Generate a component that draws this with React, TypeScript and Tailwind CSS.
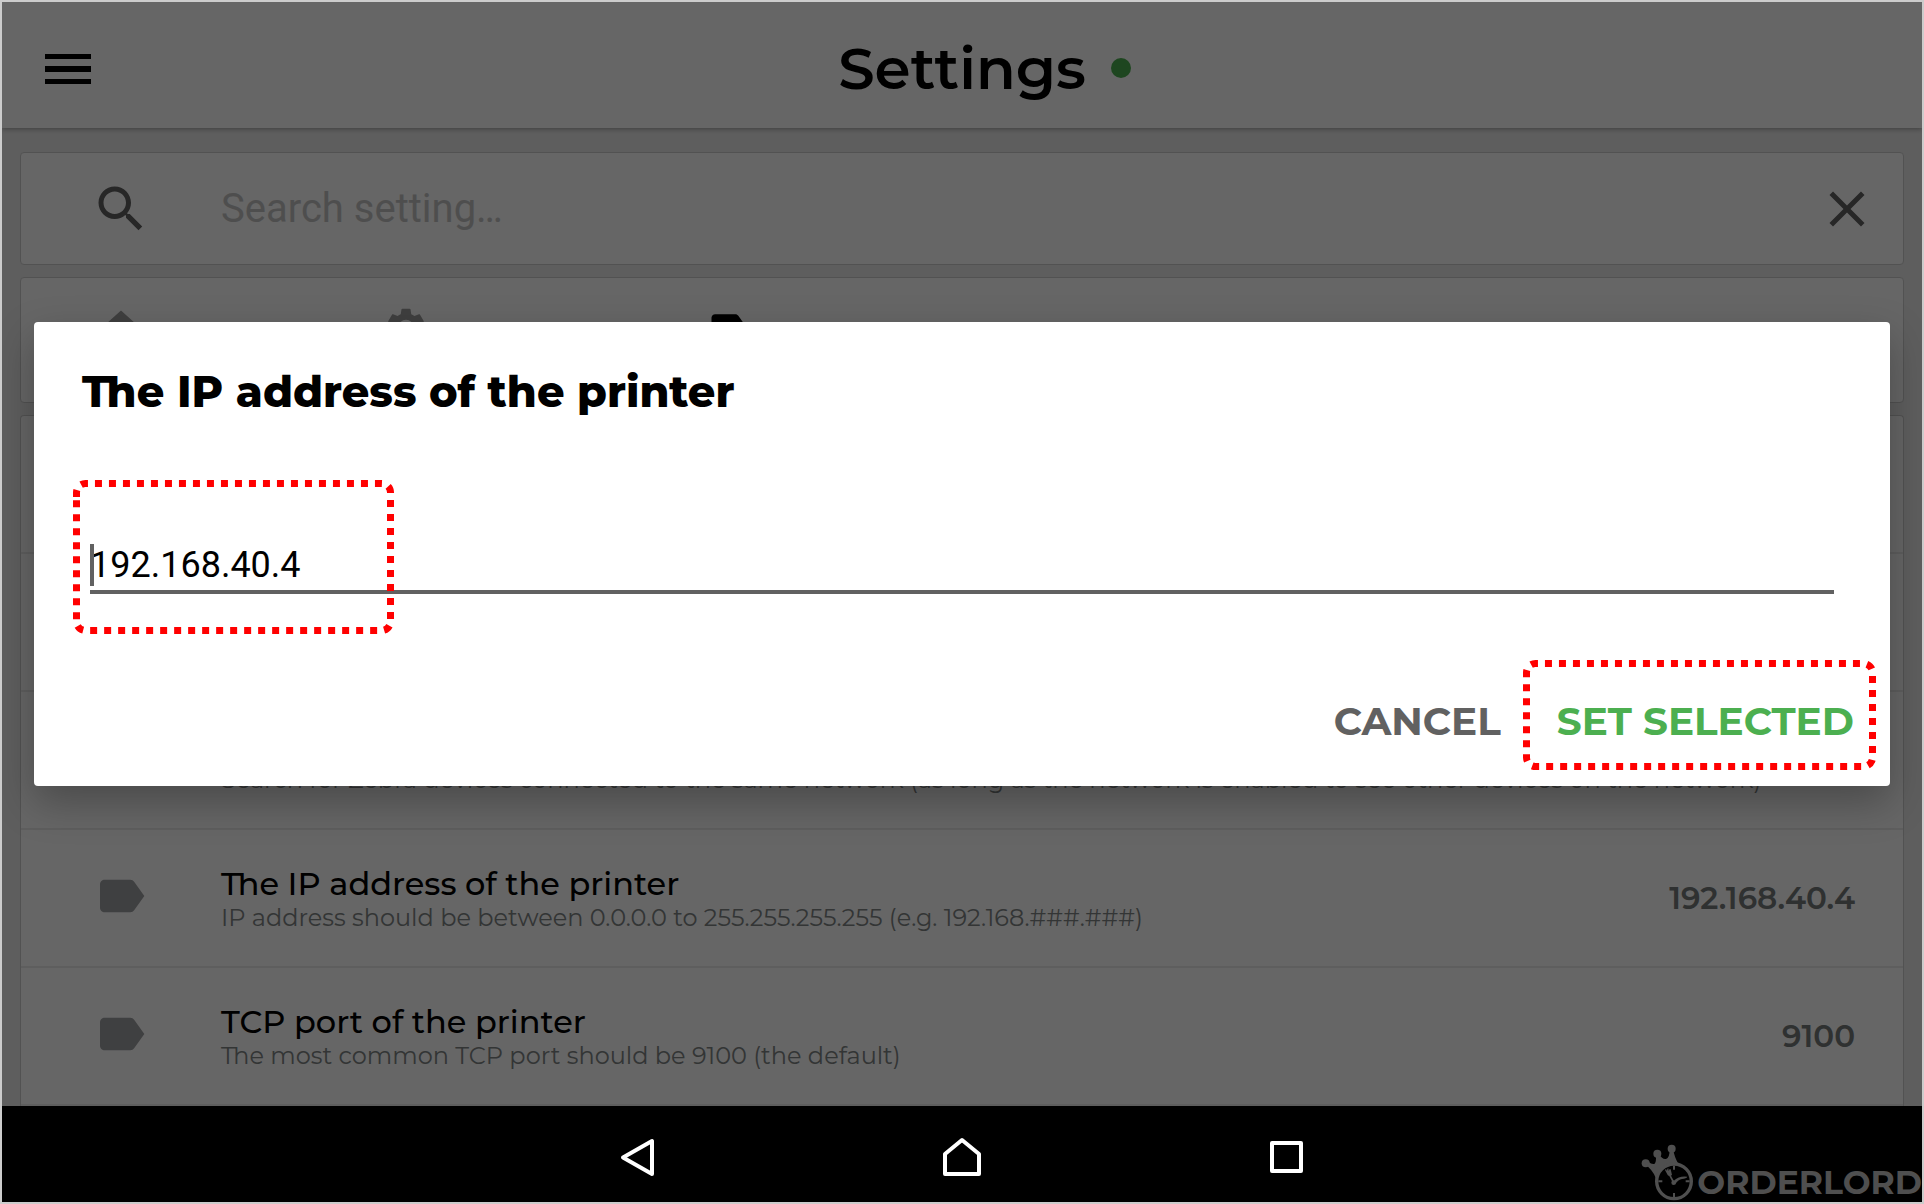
import React, { useState } from "react";

const GEAR =
  "M19.43 12.98c.04-.32.07-.64.07-.98s-.03-.66-.07-.98l2.11-1.65c.19-.15.24-.42.12-.64l-2-3.46c-.12-.22-.39-.3-.61-.22l-2.49 1c-.52-.4-1.08-.73-1.69-.98l-.38-2.65C14.46 2.18 14.25 2 14 2h-4c-.25 0-.46.18-.49.42l-.38 2.65c-.61.25-1.17.59-1.69.98l-2.49-1c-.23-.09-.49 0-.61.22l-2 3.46c-.13.22-.07.49.12.64l2.11 1.65c-.04.32-.07.65-.07.98s.03.66.07.98l-2.11 1.65c-.19.15-.24.42-.12.64l2 3.46c.12.22.39.3.61.22l2.49-1c.52.4 1.08.73 1.69.98l.38 2.65c.03.24.24.42.49.42h4c.25 0 .46-.18.49-.42l.38-2.65c.61-.25 1.17-.59 1.69-.98l2.49 1c.23.09.49 0 .61-.22l2-3.46c.12-.22.07-.49-.12-.64l-2.11-1.65zM12 16a4 4 0 1 1 0-8 4 4 0 0 1 0 8z";
const HOME = "M10 20v-6h4v6h5v-8h3L12 3 2 12h3v8z";
const LABEL =
  "M17.63 5.84C17.27 5.33 16.67 5 16 5L5 5.01C3.9 5.01 3 5.9 3 7v10c0 1.1.9 1.99 2 1.99L16 19c.67 0 1.27-.33 1.63-.84L22 12l-4.37-6.16z";
const SEARCH =
  "M15.5 14h-.79l-.28-.27C15.41 12.59 16 11.11 16 9.5 16 5.91 13.09 3 9.5 3S3 5.91 3 9.5 5.91 16 9.5 16c1.61 0 3.09-.59 4.23-1.57l.27.28v.79l5 4.99L20.49 19l-4.99-5zm-6 0C7.01 14 5 11.99 5 9.5S7.01 5 9.5 5 14 7.01 14 9.5 11.99 14 9.5 14z";
const CLOSE =
  "M19 6.41 17.59 5 12 10.59 6.41 5 5 6.41 10.59 12 5 17.59 6.41 19 12 13.41 17.59 19 19 17.59 13.41 12z";

function Icon({ d, className }: { d: string; className: string }) {
  return (
    <svg viewBox="0 0 24 24" fill="currentColor" fillRule="evenodd" aria-hidden="true" className={className}>
      <path d={d} />
    </svg>
  );
}

function Highlight({ w, h, className }: { w: number; h: number; className: string }) {
  const r = 9;
  const d = `M3.5 17V${3.5 + r}a${r} ${r} 0 0 1 ${r} -${r}H${w - 3.5 - r}a${r} ${r} 0 0 1 ${r} ${r}V${h - 3.5 - r}a${r} ${r} 0 0 1 -${r} ${r}H${3.5 + r}a${r} ${r} 0 0 1 -${r} -${r}V17`;
  return (
    <svg
      width={w}
      height={h}
      viewBox={`0 0 ${w} ${h}`}
      aria-hidden="true"
      className={`pointer-events-none absolute max-w-none ${className}`}
    >
      <path d={d} fill="none" stroke="#ff0000" strokeWidth="7" strokeDasharray="7 7" />
    </svg>
  );
}

type Setting = { title?: string; hint?: string; value?: string };

const settings: Setting[] = [
  {},
  {},
  {
    hint: "Search for Zebra devices connected to the same network (as long as the network is enabled to see other devices on the network)",
  },
  {
    title: "The IP address of the printer",
    hint: "IP address should be between 0.0.0.0 to 255.255.255.255 (e.g. 192.168.###.###)",
    value: "192.168.40.4",
  },
  {
    title: "TCP port of the printer",
    hint: "The most common TCP port should be 9100 (the default)",
    value: "9100",
  },
];

function SettingRow({ title, hint, value }: Setting) {
  return (
    <li className="flex h-[138px] items-center border-b-2 border-[#ebebeb] pr-12 pl-[72px]">
      <Icon d={LABEL} className="mb-1 size-14 shrink-0 text-[#9fa0a3]" />
      <div className="ml-[72px] min-w-0 flex-1 whitespace-nowrap">
        <div className="h-10 text-[32px] leading-10 font-medium text-black">{title}</div>
        <div className="h-7 text-[24px] leading-7 text-[#808585]">{hint}</div>
      </div>
      <div className="text-[31px] leading-10 font-semibold text-[#757a7a]">{value}</div>
    </li>
  );
}

function Dialog() {
  const [ip, setIp] = useState("192.168.40.4");
  return (
    <div className="absolute inset-0 flex items-center bg-black/60 px-8">
      <form
        role="dialog"
        aria-labelledby="dialog-title"
        onSubmit={(e) => e.preventDefault()}
        className="w-full rounded bg-white pt-11 pb-[41px] shadow-[0_16px_40px_rgba(0,0,0,0.28)]"
      >
        <h2 id="dialog-title" className="px-12 text-[43px] leading-[52px] font-extrabold text-black">
          The IP address of the printer
        </h2>
        <div className="relative mx-14 mt-[126px]">
          <input
            type="text"
            aria-labelledby="dialog-title"
            value={ip}
            onChange={(e) => setIp(e.target.value)}
            className="block h-[50px] w-full border-b-4 border-[#616161] pb-1 font-[Roboto,sans-serif] text-[36px] leading-[42px] text-black outline-none"
          />
          <span className="absolute top-0 left-0 h-[42px] w-1 bg-[#616161]" />
          <Highlight w={321} h={154} className="-top-16 -left-[17px]" />
        </div>
        <div className="mt-[103px] flex justify-end gap-14 pr-9 text-[39px] leading-[48px] font-bold">
          <button type="button" className="text-[#616161]">
            CANCEL
          </button>
          <div className="relative">
            <button type="submit" className="text-[#4caf50]">
              SET SELECTED
            </button>
            <Highlight w={353} h={110} className="-top-[37px] -left-[34px]" />
          </div>
        </div>
      </form>
    </div>
  );
}

function Logo() {
  return (
    <div className="absolute right-0 bottom-0 flex items-end gap-0.5 text-[#4f4f4f]">
      <svg viewBox="12 21 162 174" aria-hidden="true" className="h-[58px] w-[54px]">
        <g fill="currentColor">
          <circle cx="26" cy="79" r="12" />
          <circle cx="61" cy="50" r="12" />
          <circle cx="104" cy="35" r="12" />
          <path d="M24 82L34 74Q46 84 53 80Q58 76 57 54L66 52Q76 68 87 66Q98 62 98 38L109 38Q111 58 126 84L56 122Q46 98 24 82Z" />
        </g>
        <circle cx="111" cy="133" r="52" fill="#000" stroke="currentColor" strokeWidth="10" />
        <g stroke="currentColor" strokeWidth="6" fill="none">
          <path d="M111 86v12M111 168v12M64 133h12M146 133h12" />
          <path d="M111 138L97 112" strokeWidth="5" />
        </g>
        <g fill="currentColor">
          <circle cx="110" cy="137" r="7" />
          <path d="M84 99l3-3 3 6 1-7 3-1 1 8 3-6 3 1 4 17q-8 6-13 0z" />
          <path d="M112 130Q126 116 151 119Q148 125 135 126Q124 128 115 141Z" />
        </g>
      </svg>
      <span className="text-[33px] leading-10 font-bold">ORDERLORD</span>
    </div>
  );
}

export default function App() {
  return (
    <div className="flex min-h-screen flex-col overflow-hidden border-2 border-[#ccc] bg-black font-[Montserrat,Inter,sans-serif] [font-variant-ligatures:discretionary-ligatures]">
      <div className="relative flex flex-1 flex-col overflow-hidden bg-[#ebebeb]">
        <header className="relative flex h-[126px] items-center justify-center bg-white pt-2 shadow-[0_1px_5px_rgba(0,0,0,0.35)]">
          <button type="button" aria-label="Menu" className="absolute left-[43px]">
            <svg viewBox="0 0 46 30" aria-hidden="true" className="h-[30px] w-[46px]">
              <path d="M0 0h46v5H0zM0 12h46v6H0zM0 25h46v5H0z" />
            </svg>
          </button>
          <h1 className="relative text-[58px] leading-[72px] font-semibold text-black">
            Settings
            <span className="absolute top-[25px] left-full ml-[25px] size-5 rounded-full bg-[#4caf50]" />
          </h1>
        </header>
        <main className="flex flex-1 flex-col gap-3 px-[18px] pt-6">
          <div className="flex h-[113px] items-center rounded border border-[#cdcdcd] bg-white pr-[26px] pl-[70px] text-[#616161]">
            <Icon d={SEARCH} className="size-[60px] shrink-0" />
            <input
              type="search"
              aria-label="Search setting"
              placeholder="Search setting…"
              className="ml-[70px] h-16 min-w-0 flex-1 font-[Roboto,sans-serif] text-[40px] outline-none placeholder:text-[#c4c4c4]"
            />
            <button type="button" aria-label="Clear search">
              <Icon d={CLOSE} className="size-[60px]" />
            </button>
          </div>
          <nav
            aria-label="Breadcrumb"
            className="flex h-[126px] items-start rounded border border-[#cdcdcd] bg-white pt-[27px] pl-[78px]"
          >
            <Icon d={HOME} className="size-11 text-[#9e9e9e]" />
            <Icon d={GEAR} className="ml-[241px] size-11 text-[#9e9e9e]" />
            <Icon d={LABEL} className="ml-[278px] size-11 text-black" />
          </nav>
          <ul className="rounded-t border border-b-0 border-[#cdcdcd] bg-white">
            {settings.map((s, i) => (
              <SettingRow key={i} {...s} />
            ))}
          </ul>
        </main>
        <Dialog />
      </div>
      <footer className="relative flex h-24 items-center justify-center gap-[284px] pt-1.5 text-white">
        <button type="button" aria-label="Back">
          <svg viewBox="0 0 40 40" fill="none" stroke="currentColor" strokeWidth="4" strokeLinejoin="round" className="size-10">
            <path d="M34 4v33L5 20.500z" />
          </svg>
        </button>
        <button type="button" aria-label="Home">
          <svg viewBox="0 0 40 40" fill="none" stroke="currentColor" strokeWidth="4" strokeLinejoin="round" className="size-10">
            <path d="M3 37V17L20 3l17 14v20z" />
          </svg>
        </button>
        <button type="button" aria-label="Recent apps">
          <svg viewBox="0 0 40 40" fill="none" stroke="currentColor" strokeWidth="4" strokeLinejoin="round" className="size-10">
            <path d="M6 6h29v28H6z" />
          </svg>
        </button>
        <Logo />
      </footer>
    </div>
  );
}
